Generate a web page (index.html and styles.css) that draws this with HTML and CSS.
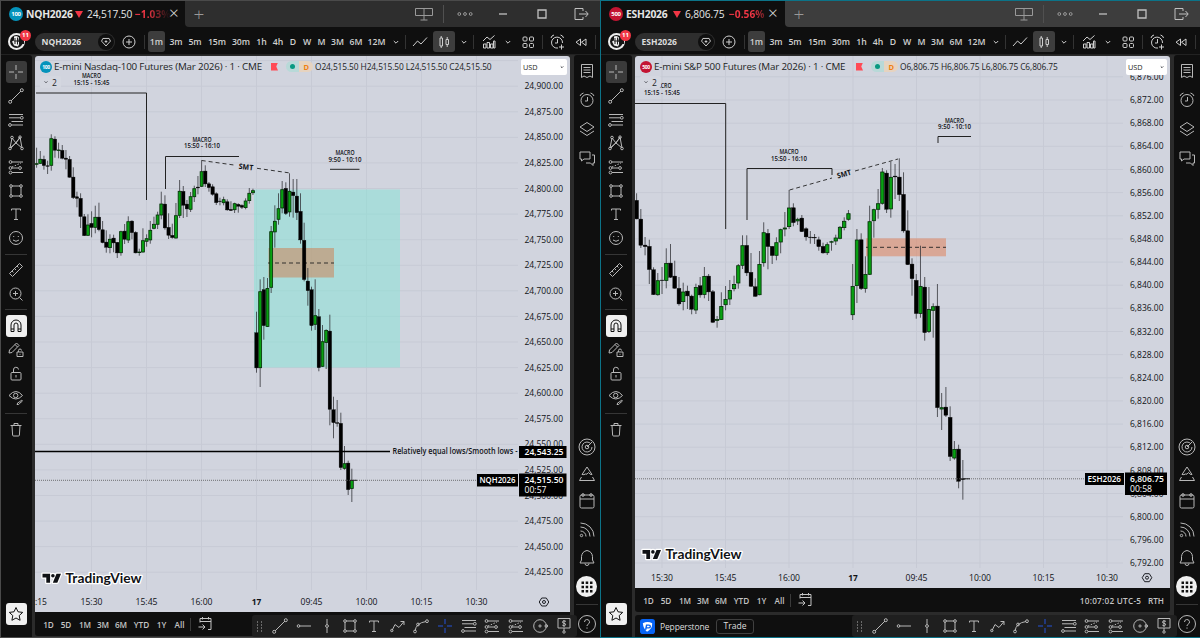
FILE: index.html
```html
<!DOCTYPE html>
<html lang="en">
<head>
<meta charset="utf-8">
<title>NQH2026 / ESH2026</title>
<link rel="stylesheet" href="styles.css">
</head>
<body>
<svg class="defs" width="0" height="0" aria-hidden="true">
  <symbol id="cross" viewBox="0 0 18 18"><path d="M9 2v5M9 11v5M2 9h5M11 9h5"/></symbol>
  <symbol id="trend" viewBox="0 0 18 18"><path d="M4 14 14 4"/><circle cx="3.2" cy="14.8" r="1.5"/><circle cx="14.8" cy="3.2" r="1.5"/></symbol>
  <symbol id="fib" viewBox="0 0 18 18"><path d="M2 3.5h14M2 6.8h11M4.500 10.5H16M4.500 14H16"/><circle cx="14.8" cy="6.800" r="1.400"/><circle cx="3" cy="14" r="1.400"/></symbol>
  <symbol id="xabcd" viewBox="0 0 18 18"><path d="m3 14 2-10 4 5 4-6 2 11-6-5zM4 14l9-10"/><circle cx="3" cy="14.500" r="1.300"/><circle cx="5" cy="3.500" r="1.300"/><circle cx="13" cy="3.200" r="1.300"/><circle cx="15" cy="14.500" r="1.300"/></symbol>
  <symbol id="pos" viewBox="0 0 18 18"><path d="M5 4h11M5 10h6M5 14.500h11"/><path stroke-dasharray="1.500 1.500" d="m5 9 9-4"/><circle cx="3.500" cy="4" r="1.400"/><circle cx="3.500" cy="10" r="1.400"/><circle cx="3.500" cy="14.500" r="1.400"/><circle cx="13" cy="10" r="1.400"/></symbol>
  <symbol id="rect" viewBox="0 0 18 18"><path d="M5 4h8M5 14h8M4 5v8M14 5v8"/><circle cx="4" cy="4" r="1.300"/><circle cx="14" cy="4" r="1.300"/><circle cx="4" cy="14" r="1.300"/><circle cx="14" cy="14" r="1.300"/></symbol>
  <symbol id="text" viewBox="0 0 18 18"><path d="M4.500 5.500V4h9v1.500M9 4v10.500M7 14.500h4"/></symbol>
  <symbol id="smile" viewBox="0 0 18 18"><circle cx="9" cy="9" r="6.500"/><path d="M6.700 7v1M11.300 7v1M6 11q3 2.600 6 0"/></symbol>
  <symbol id="ruler" viewBox="0 0 18 18"><path d="m2.500 12.500 10-10 3 3-10 10zM5 10l1.500 1.500M7.500 7.500 9 9M10 5l1.500 1.500"/></symbol>
  <symbol id="zoomin" viewBox="0 0 18 18"><circle cx="8.500" cy="8.500" r="5.500"/><path d="m12.500 12.500 3 3M6 8.500h5M8.500 6v5"/></symbol>
  <symbol id="magnet" viewBox="0 0 18 18"><path d="M4 14.500V8a5 5 0 0 1 10 0v6.500h-3V8a2 2 0 0 0-4 0v6.500zM4 12h3M11 12h3"/></symbol>
  <symbol id="penlock" viewBox="0 0 18 18"><path d="m2 12 .5-3 7-7 2.500 2.500-7 7zM8 3.500 10.500 6M10 11h6v4.500h-6zM11.500 11V9.500a1.500 1.500 0 0 1 3 0M13 12.800v1"/></symbol>
  <symbol id="lock" viewBox="0 0 18 18"><rect x="4" y="7.500" width="10" height="7.500" rx="1"/><path d="M6.500 7.500V5a2.500 2.500 0 0 1 5-.5M9 10v2.500"/></symbol>
  <symbol id="eye" viewBox="0 0 18 18"><path d="M2 6.500q7-8 13.500 0-6.500 7-13.500 0zM10 15.500q2 .5 2.500-1l3-2.500-.8-.8-2.700 2q-1.500 0-2 2.300z"/><circle cx="8.700" cy="6.500" r="2.200"/></symbol>
  <symbol id="trash" viewBox="0 0 18 18"><path d="M3.500 4.500h11M7 4.500v-2h4v2M5 4.500l.6 9.500q.1 1 1 1h4.800q.900 0 1-1l.6-9.500"/></symbol>
  <symbol id="star" viewBox="0 0 18 18"><path d="m9 2.500 2 4.300 4.700.6-3.500 3.200.9 4.700L9 13l-4.100 2.300.9-4.700L2.300 7.400 7 6.800z"/></symbol>
  <symbol id="list" viewBox="0 0 18 18"><path d="M3.500 2.500h11v13L12 14l-3 1.500L6 14l-2.500 1.500zM5.500 5.500h7M5.500 8h7M5.500 10.500h7"/></symbol>
  <symbol id="alarm" viewBox="0 0 18 18"><circle cx="9" cy="9.500" r="6"/><path d="M9.500 6v4H7M2 5q1-2.500 3.500-3M16 5q-1-2.500-3.500-3"/></symbol>
  <symbol id="alarmadd" viewBox="0 0 18 18"><path d="M14.500 10a5.500 5.500 0 1 0-4.500 5M9.500 6v4H7M3 5q.5-2.500 3-3M15.500 5q-.5-2.500-3-3M13.500 11.500v5M11 14h5"/></symbol>
  <symbol id="layers" viewBox="0 0 18 18"><path d="m9 2.500 7 4.500-7 4.500L2 7zM2 11l7 4.500L16 11"/></symbol>
  <symbol id="chat" viewBox="0 0 18 18"><path d="M2 3h10v7H6l-2.500 2V10H2zM14 6h2.500v8H15v2.500L12.500 14H8"/></symbol>
  <symbol id="target" viewBox="0 0 18 18"><circle cx="9" cy="9" r="8"/><path d="M13 6A5 5 0 1 0 14 9M9 9l5-5"/><circle cx="9" cy="9" r="1.800"/></symbol>
  <symbol id="pyramid" viewBox="0 0 18 18"><path d="m9 2 5 7.500q-2 .5-3.500-2-1.500 2.500-3 1.500-1.500 1-3.500.5zM3.500 12l-2 3.500h15l-2-3.500"/></symbol>
  <symbol id="cal" viewBox="0 0 18 18"><rect x="2" y="3" width="14" height="13" rx="1.500"/><path d="M2 7h14"/><circle cx="5" cy="3" r="1.300"/><circle cx="13" cy="3" r="1.300"/></symbol>
  <symbol id="rss" viewBox="0 0 18 18"><circle cx="3.500" cy="14.500" r="1.200"/><path d="M2.500 10a5.500 5.500 0 0 1 5.500 5.500M2.500 6a9.500 9.500 0 0 1 9.500 9.500M2.500 2A13.500 13.500 0 0 1 16 15.500"/></symbol>
  <symbol id="bell" viewBox="0 0 18 18"><path d="M2 14h14l-1.500-3V7.500Q14 2.500 9 1.500 4 2.500 3.500 7.500V11zM7 14.500a2 2 0 0 0 4 0"/></symbol>
  <symbol id="apps" viewBox="0 0 18 18"><path class="solid" d="M3.500 3.500h2.500V6H3.500zM7.700 3.500h2.500V6H7.700zM12 3.500h2.500V6H12zM3.500 7.700h2.500v2.500H3.500zM7.700 7.700h2.500v2.500H7.700zM12 7.700h2.500v2.500H12zM3.500 12h2.500v2.500H3.500zM7.700 12h2.500v2.500H7.700zM12 12h2.500v2.500H12z"/></symbol>
  <symbol id="help" viewBox="0 0 18 18"><circle cx="9" cy="9" r="8.500"/><path d="M6.500 7a2.500 2.500 0 1 1 3.500 2.300q-1 .5-1 1.700M9 12.500v1.200"/></symbol>
  <symbol id="chev" viewBox="0 0 18 18"><path d="m6.800 8 2.200 2.200L11.200 8"/></symbol>
  <symbol id="line" viewBox="0 0 18 18"><path d="m2 13 4.500-5L10 11l6-6.500"/></symbol>
  <symbol id="candles" viewBox="0 0 18 18"><path d="M5 5h2.500v8H5zM6.200 3v2M6.200 13v2M11 6.500h2.500v5H11zM12.200 4v2.500M12.200 11.500V14"/></symbol>
  <symbol id="ind" viewBox="0 0 18 18"><path d="M3.500 15v-4H6v4zM7 15V9.500h2.500V15zM10.500 15v-4H13v4zM13.500 15V8H15v7zM3 8l4-4 3 2.500 4.500-4"/></symbol>
  <symbol id="grid4" viewBox="0 0 18 18"><rect x="4" y="4" width="4" height="4" rx="1"/><rect x="10.500" y="4" width="4" height="4" rx="1"/><rect x="4" y="10.500" width="4" height="4" rx="1"/><rect x="10.500" y="10.500" width="4" height="4" rx="1"/></symbol>
  <symbol id="rewind" viewBox="0 0 18 18"><path d="M8.500 6v6.500L4 9.200zM14 6v6.500L9.500 9.200z"/></symbol>
  <symbol id="plusc" viewBox="0 0 18 18"><circle cx="9" cy="9" r="6"/><path d="M6 9h6M9 6v6"/></symbol>
  <symbol id="gem" viewBox="0 0 18 18"><path d="M5.500 5h7L14 8l-5 5.500L4 8z"/><path d="M9 7v3M7.500 8.500h3"/></symbol>
  <symbol id="hline" viewBox="0 0 18 18"><path d="M4.500 9H16"/><circle cx="3.500" cy="9" r="1.300"/></symbol>
  <symbol id="vline" viewBox="0 0 18 18"><path d="M9 2v5.500M9 10.500V16"/><circle cx="9" cy="9" r="1.400"/></symbol>
  <symbol id="poly" viewBox="0 0 18 18"><path d="m3 13.500 3-6 4 3 5-6M11.500 4.500H15V8"/><circle cx="2.800" cy="13.500" r="1.200"/></symbol>
  <symbol id="curve" viewBox="0 0 18 18"><path d="M3 14Q4 6 14 4.500"/><circle cx="3" cy="14.500" r="1.400"/><circle cx="6" cy="7.500" r="1.400"/><circle cx="15" cy="4.200" r="1.400"/></symbol>
  <symbol id="circ" viewBox="0 0 18 18"><circle cx="9" cy="9" r="6.300"/><circle cx="9" cy="9" r="1.100"/><circle cx="15.300" cy="9" r="1.300"/></symbol>
  <symbol id="board" viewBox="0 0 18 18"><path d="M3 1.500h12V11H3zM9 11v3M11 4.300q-3.500-1.300-3.500.7 0 1.200 1.500 1.300 2 .3 1.700 1.600-.7 1.400-3.400.3M9 3v7"/><circle cx="9" cy="15" r="1.200"/></symbol>
  <symbol id="goto" viewBox="0 0 18 18"><path d="M4 7.500v-4h11v11h-3M4 6.500h11M6.500 2v2.500M12.500 2v2.500M2.500 12h6M6.500 9.500 9 12l-2.500 2.500"/></symbol>
  <symbol id="layout" viewBox="0 0 18 18"><path d="M.5 3.500h17v7H.5zM9 3.500V15M5.500 15h7"/></symbol>
  <symbol id="dots" viewBox="0 0 18 18"><circle cx="3.300" cy="9" r="1.400"/><circle cx="9" cy="9" r="1.400"/><circle cx="14.700" cy="9" r="1.400"/></symbol>
  <symbol id="min" viewBox="0 0 18 18"><path stroke-width="1.300" d="M5 9h8"/></symbol>
  <symbol id="max" viewBox="0 0 18 18"><path stroke-width="1.300" d="M5 5h8v8H5z"/></symbol>
  <symbol id="exit" viewBox="0 0 18 18"><path d="M11 6V3.500H3v11h8V12M7 9h9M13.500 6 16.200 9l-2.700 3"/></symbol>
  <symbol id="drag" viewBox="0 0 18 18"><path class="solid" d="M6 4.500h1v1H6zM10 4.500h1v1h-1zM6 7.500h1v1H6zM10 7.500h1v1h-1zM6 10.500h1v1H6zM10 10.500h1v1h-1zM6 13.500h1v1H6zM10 13.500h1v1h-1z"/></symbol>
  <symbol id="hex" viewBox="0 0 18 18"><path d="M6.700 5h4.600l2.500 4-2.500 4H6.700L4.200 9z"/><circle cx="9" cy="9" r="1.500"/></symbol>
</svg>

<main class="desktop">
  <section class="window" data-window="nq">
    <header class="tabs">
      <div class="tab"><span class="coin nq">100</span><b class="sym">NQH2026</b><i class="down"></i><span class="last">24,517.50</span><b class="chg">−1.03%</b><span class="close">×</span></div>
      <div class="rest"></div>
    </header>
    <nav class="toolbar" data-symbol="NQH2026"></nav>
    <aside class="rail left"></aside>
    <div class="center">
      <div class="chart">
        <svg class="plot" viewBox="35 56 535 556"></svg>
        <div class="legend"><span class="coin nq">100</span><span class="title nqt">E-mini Nasdaq-100 Futures (Mar 2026) · 1 · CME</span><i class="flag"></i><span class="status"><i></i><b>D</b></span><span class="ohlc nqo">O24,515.50 H24,515.50 L24,515.50 C24,515.50</span></div>
        <div class="count"><svg class="ic"><use href="#chev"/></svg>2</div>
        <div class="currency nqc">USD<svg class="ic"><use href="#chev"/></svg></div>
      </div>
      <footer class="ranges"></footer>
    </div>
    <aside class="rail right"></aside>
    <div class="drawbar"></div>
  </section>

  <section class="window active" data-window="es">
    <header class="tabs">
      <div class="tab"><span class="coin es">500</span><b class="sym">ESH2026</b><i class="down"></i><span class="last">6,806.75</span><b class="chg">−0.56%</b><span class="close">×</span></div>
      <div class="rest"></div>
    </header>
    <nav class="toolbar" data-symbol="ESH2026"></nav>
    <aside class="rail left"></aside>
    <div class="center">
      <div class="chart">
        <svg class="plot" viewBox="635 56 535 532"></svg>
        <div class="legend"><span class="coin es">500</span><span class="title est">E-mini S&amp;P 500 Futures (Mar 2026) · 1 · CME</span><i class="flag"></i><span class="status"><i></i><b>D</b></span><span class="ohlc eso">O6,806.75 H6,806.75 L6,806.75 C6,806.75</span></div>
        <div class="count"><svg class="ic"><use href="#chev"/></svg>2</div>
        <div class="currency">USD<svg class="ic"><use href="#chev"/></svg></div>
      </div>
      <footer class="ranges"></footer>
      <div class="broker">
        <svg class="brokerlogo" viewBox="0 0 16 16"><rect width="16" height="16" rx="3"/><path d="M3 4.500q5-2.500 10 0 .5 6-5.500 9Q3.500 10 3 4.500z"/><path class="cut" d="M6 11.500 7 6.500h2.500a1.500 1.500 0 0 1 0 3H7"/></svg>
        <span class="brokername">Pepperstone</span><span class="trade">Trade</span>
      </div>
    </div>
    <aside class="rail right"></aside>
    <div class="drawbar"></div>
  </section>
</main>
<script src="app.js"></script>
</body>
</html>
```

FILE: styles.css
```css
* { box-sizing: border-box; }
body { margin: 0; background: #0f0f0f; color: #d0d0d0; font-family: "Open Sans", "Noto Sans", sans-serif; font-size: 9px; }
.defs { position: absolute; }
.desktop { display: grid; grid-template-columns: 600px 600px; height: 638px; overflow: hidden; }
.window { position: relative; display: grid; grid-template: 26px 28px 582px / 32px 541px 26px; border: 1px solid #4a4a4a; border-right: 0; height: 638px; width: 600px; background: #2b2b2b; }
.window.active { border-color: #0c7388; }
.ic { width: 18px; height: 18px; flex: none; fill: none; stroke: currentColor; stroke-width: 1; overflow: visible; }
.solid { fill: currentColor; stroke: none; }

.tabs { grid-column: 1 / -1; display: grid; grid-template-columns: 184px 1fr; background: #0f0f0f; }
.tab { display: flex; align-items: center; padding-left: 8px; white-space: nowrap; color: #e6e6e6; }
.coin { width: 14px; height: 14px; border-radius: 50%; display: grid; place-items: center; color: #fff; font-size: 6px; font-weight: 700; letter-spacing: -.3px; flex: none; }
.coin.nq { background: #0593bb; }
.coin.es { background: #c31432; }
.sym { font-size: 10.300px; width: 45px; margin-left: 3px; letter-spacing: -.2px; }
.down { border: 4px solid transparent; border-top: 7px solid #f23645; border-bottom: 0; margin: 0 4px; }
.last { font-size: 10.200px; width: 45px; letter-spacing: -.1px; margin-right: 3px; }
.active .sym { width: 43px; }
.active .last { width: 41px; }
.chg { font-size: 10.200px; width: 35px; overflow: hidden; background: linear-gradient(90deg, #f23645 35%, #f2364510 95%); background-clip: text; color: transparent; }
.active .chg { width: 40px; background-image: linear-gradient(90deg, #f23645 60%, #f2364530); }
.close { font-size: 17px; line-height: 10px; font-weight: 300; padding-bottom: 2px; margin-left: -1px; }
.rest { background: #2e2e2e; border-bottom-left-radius: 4px; display: grid; grid-template-columns: 28px 192px 38px 1px 41px 36px 42px 36px; place-items: center; color: #999; }
.active .rest { background: #3d3d3d; }
.rest .bar { width: 1px; height: 18px; background: #505050; }
.rest .ic:nth-last-child(-n+3) { color: #c0c0c0; }
.plus { font-size: 19px; line-height: 20px; font-weight: 300; color: #999; }

.toolbar { grid-column: 1 / -1; background: #0f0f0f; border-bottom: 1px solid #222; display: grid; padding-top: 2px; align-items: center; justify-items: center; white-space: nowrap;
  grid-template-columns: 31px 85px 24px 6px 19px 20px 18px 26px 22px 19px 14px 16px 12px 17px 15px 22px 19px 19px 1px 27px 22px 17px 3px 28px 10px 29px 1px 27px 22px 6px; }
.toolbar > span { display: flex; justify-content: center; width: 0; font-weight: 600; font-size: 8.700px; color: #cfcfcf; }
.toolbar > .on { width: 17px; height: 21px; align-items: center; background: #3d3d3d; border-radius: 3px; }
.toolbar > .on:has(svg) { width: 22px; }
.toolbar .bar { width: 1px; height: 14px; background: #333; }
.avatar { width: 17px; height: 17px; border-radius: 50%; background: #eee; position: relative; }
.avatar svg { display: block; width: 17px; height: 17px; }
.avatar b { position: absolute; left: 12px; top: -3px; width: 11px; height: 11px; border-radius: 50%; background: #f23645; color: #fff; font-size: 6px; line-height: 11px; text-align: center; }
.pill { width: 80px; height: 18px; border-radius: 9px; background: #2e2e2e; display: flex; align-items: center; justify-content: space-between; padding: 0 1px 0 7px; font-weight: 700; font-size: 8.500px; color: #ddd; }
.pill .ic { width: 16px; height: 16px; border-radius: 50%; background: #0f0f0f; }

.rail { background: #0f0f0f; display: grid; justify-items: center; align-items: center; color: #b8b8b8; }
.rail .bar { width: 22px; height: 1px; background: #363636; }
.rail.left { width: 31px; padding-top: 5px; align-content: start; border-top-right-radius: 3px; grid-template-rows: 24px 24px 23px 24px 24px 23px 24px 24px 8px 24px 23px 9px 24px 24px 24px 23px 9px 23px 162px 22px; }
.rail.right { width: 26px; padding-top: 2px; padding-right: 1px; align-content: start; border-top-left-radius: 3px; grid-template-rows: 28px 29px 29px 29px 261px 27px 27px 28px 29px 28px 29px 7px 31px; }
.rail .box { width: 21px; height: 22px; border-radius: 3px; display: grid; place-items: center; background: #3a3a3a; }
.rail .box.white { background: #f0f0f0; color: #111; }
.rail.left > * { margin-right: 1px; }
.rail .round { width: 21px; height: 21px; border-radius: 50%; display: grid; place-items: center; background: #f0f0f0; color: #111; }

.center { margin: 1px 4px 0 2px; width: 535px; display: flex; flex-direction: column; }
.chart { position: relative; height: 556px; flex: none; border-radius: 3px 3px 0 0; overflow: hidden; background: #d1d4de; color: #1c1e24; }
.active .chart { height: 532px; }
.plot { display: block; width: 535px; height: 100%; font-size: 8.800px; font-weight: 500; fill: #101216; }
.legend { position: absolute; left: 5px; top: 3px; height: 15px; display: flex; align-items: center; white-space: nowrap; font-weight: 500; }
.legend .coin { width: 12px; height: 12px; font-size: 5px; }
.title { font-size: 9.800px; letter-spacing: -.18px; margin-left: 2px; width: 217px; flex: none; }
.title.est { width: 202px; }
.flag { width: 7px; height: 8px; background: #ff4a55; clip-path: polygon(0 0, 100% 0, 75% 50%, 100% 100%, 0 100%); }
.status { width: 27px; height: 11px; margin-left: 8px; border-radius: 6px; background: linear-gradient(90deg, #b8d9d8 50%, #e6d3c0 50%); display: grid; grid-template-columns: 1fr 1fr; place-items: center; color: #f08010; font-size: 7.500px; }
.status i { width: 5px; height: 5px; border-radius: 50%; background: #089981; }
.ohlc { font-size: 8.400px; margin-left: 2px; letter-spacing: -.09px; }
.count { position: absolute; left: 5px; top: 20px; height: 12px; display: flex; align-items: center; font-size: 8.500px; padding-right: 4px; background: #d4d7e0; border-radius: 2px; }
.count .ic { width: 12px; }
.currency { position: absolute; right: 3px; top: 3px; width: 41px; height: 16px; border-radius: 2px; background: #fff; font-size: 7.300px; font-weight: 500; display: flex; align-items: center; justify-content: space-between; padding-left: 2px; }
.currency.nqc { width: 46px; }
.currency .ic { width: 10px; stroke-width: 1.500; }

.ranges { height: 24px; flex: none; background: #0f0f0f; display: grid; align-items: center; justify-items: center; white-space: nowrap; font-size: 8.200px; font-weight: 600; color: #c4c4c4; grid-template-columns: 5px 17px 18px 20px 16px 20px 21px 19px 17px 4px 26px 1fr 63px 28px; border-radius: 0 0 3px 3px; }
.ranges .bar { width: 1px; height: 13px; background: #3a3a3a; }
.ranges span { display: flex; justify-content: center; width: 0; }
.ranges .clock { letter-spacing: .25px; }
.broker { margin-top: 3px; height: 22px; background: #0f0f0f; display: flex; align-items: center; padding-left: 5px; border-radius: 3px 3px 0 0; }
.brokerlogo { width: 15px; height: 15px; fill: #fff; }
.brokerlogo rect { fill: #0764f5; }
.brokerlogo .cut { fill: none; stroke: #0764f5; stroke-width: 1.500; }
.brokername { margin-left: 5px; width: 56px; font-size: 8.500px; letter-spacing: -.15px; color: #ddd; }
.trade { width: 38px; height: 15px; border: 1px solid #404040; border-radius: 3px; display: grid; place-items: center; font-size: 8.600px; color: #ddd; }
.drawbar { position: absolute; left: 251px; bottom: 0; width: 325px; height: 22px; background: #1f1f1f; border-radius: 3px; display: grid; align-items: center; justify-items: center; color: #b8b8b8; grid-template-columns: 15px 26px 21px 25px 22px 26px 22px 24px 24px 23px 24px 24px 24px 23px; }
.drawbar .blue { color: #2552d8; }

.grid { stroke: #c7cad5; stroke-width: 1; }
.wick { stroke: #33353a; stroke-width: .8; }
.up { fill: #08a012; stroke: #052d08; stroke-width: .8; }
.dn { fill: #000; stroke: #000; stroke-width: .4; }
.note { stroke: #222; fill: none; stroke-width: 1; }
.level { stroke: #000; stroke-width: 1.500; }
.dash { stroke: #222; fill: none; stroke-dasharray: 4 3; stroke-width: .9; }
.dotted { stroke: #555; stroke-dasharray: 1 1; stroke-width: .8; }
.small { font-size: 6.200px; font-weight: 600; }
.smt { font-size: 7.500px; font-weight: 700; }
.inv { fill: #fff; }
.bold { font-weight: 700; }
.semi { font-weight: 600; }
.halo { paint-order: stroke; stroke: #fff; stroke-width: 2.500px; stroke-linejoin: round; }
.brand { font-family: Lato, sans-serif; font-weight: 700; font-size: 12.500px; }
```

FILE: app.js
```js
const icon = (id, cls = '') => `<svg class="ic ${cls}"><use href="#${id}"/></svg>`;
const bar = '<i class="bar"></i>';
const each = (sel, fn) => document.querySelectorAll(sel).forEach(fn);

each('.rest', el => {
  el.innerHTML = '<span class="plus">+</span>' + '<i></i>' + icon('layout') + bar + icon('dots') + icon('min') + icon('max') + icon('exit');
});

const avatar = `<div class="avatar"><svg viewBox="0 0 17 17"><circle cx="8.500" cy="8.500" r="6.500" fill="#151515"/><path d="M6 3.500q3-1.500 5 1l-1 4 2 1-2 4-4-1-2-4 2-1z" fill="#eee"/><path d="M7 5v6M9.500 4.500v7M6 8h4" stroke="#222" fill="none"/><path d="M11 7h5v4h-5z" fill="#151515"/></svg><b>11</b></div>`;
each('.toolbar', el => {
  const t = s => `<span>${s}</span>`;
  el.innerHTML = avatar + `<div class="pill">${el.dataset.symbol}${icon('gem')}</div>` + icon('plusc') + bar +
    '<span class="on">1m</span>' + ['3m', '5m', '15m', '30m', '1h', '4h', 'D', 'W', 'M', '3M', '6M', '12M'].map(t).join('') +
    icon('chev') + bar + icon('line') + `<span class="on">${icon('candles')}</span>` + icon('chev') + bar +
    icon('ind') + icon('chev') + icon('grid4') + bar + icon('alarmadd') + icon('rewind') + bar;
});

each('.rail.left', el => {
  el.innerHTML = `<div class="box">${icon('cross')}</div>` +
    ['trend', 'fib', 'xabcd', 'pos', 'rect', 'text', 'smile'].map(i => icon(i)).join('') + bar +
    icon('ruler') + icon('zoomin') + bar + `<div class="box white">${icon('magnet')}</div>` +
    icon('penlock') + icon('lock') + icon('eye') + bar + icon('trash') + '<i></i>' + `<div class="box white">${icon('star')}</div>`;
});
each('.rail.right', el => {
  el.innerHTML = ['list', 'alarm', 'layers', 'chat'].map(i => icon(i)).join('') + '<i></i>' +
    ['target', 'pyramid', 'cal', 'rss', 'bell'].map(i => icon(i)).join('') +
    `<div class="round">${icon('apps')}</div>` + bar + icon('help');
});
each('.drawbar', el => {
  el.innerHTML = ['drag', 'trend', 'hline', 'vline', 'rect', 'text', 'poly', 'curve'].map(i => icon(i)).join('') +
    icon('cross', 'blue') + ['fib', 'pos', 'pos', 'circ', 'board'].map(i => icon(i)).join('');
});
each('.ranges', (el) => {
  const clock = el.closest('.active') ? '<i></i><span class="clock">10:07:02 UTC-5</span><span>RTH</span>' : '';
  el.innerHTML = '<i></i>' + ['1D', '5D', '1M', '3M', '6M', 'YTD', '1Y', 'All'].map(s => `<span>${s}</span>`).join('') + bar + icon('goto') + clock;
});

/* Each candle: colour, then high, body top, body bottom and low in thirds of a pixel */
const NQ1 = 'g173,220,224,233 g183,207,221,222 b197,208,227,239 b212,227,229,252 g133,145,227,242 b139,147,181,203 g158,179,182,205 b165,181,205,208 b180,204,208,238 b198,208,262,263 b232,261,323,327 b305,320,325,352 b310,325,380,414 b372,380,437,438 g373,404,437,438 b364,400,413,442 g347,381,413,430 b338,381,419,424 b393,419,458,460 b421,456,472,488 g433,447,474,490 b434,444,459,487 b456,457,489,504 g422,424,489,497 b402,423,448,462 g379,394,451,459 b391,393,428,448 b424,427,489,490 g476,485,489,497 g415,451,487,488 g433,445,455,470 g393,420,451,461 g380,402,416,418 g365,374,404,417 g305,341,376,388 b316,342,414,419 b370,412,436,447 b401,436,443,446 g339,376,445,446 g270,303,377,384 b288,304,346,384 b330,342,357,381 g306,319,359,366 g287,295,321,336 b258,291,294,313 g211,244,290,291 b226,243,282,291 b276,281,293,305 b283,290,313,317 b307,311,338,345 b323,333,335,346 g320,328,339,346 b328,335,360,362 b334,358,362,363 g338,340,360,369 b340,343,349,368 b343,346,352,357 g325,332,354,358 g294,309,333,341 g296,301,309,315';
const NQ2 = 'b485,548,654,668 g388,424,654,711 b381,419,527,569 g384,414,530,531 g228,244,413,429 g166,213,247,293 g130,175,209,224 g93,118,175,190 b97,115,191,195 g70,123,187,200 b87,126,137,203 b87,138,188,210 b130,184,270,281 b218,271,389,394 b354,393,422,467 b410,419,527,542 g388,496,524,540 b477,500,653,664 g525,574,650,651 g538,540,578,657 b494,543,778,826 b740,779,818,865 b750,818,820,830 b788,820,953,960 g888,940,956,959 b932,939,1019,1035 g956,990,1016,1056';
const ES = 'b160,181,237,238 b207,237,316,324 b291,315,320,346 b299,319,389,432 b382,389,464,465 g399,421,465,467 b381,420,422,462 g325,369,422,445 b312,369,412,414 b362,408,445,446 b411,445,492,497 g428,455,486,511 b437,453,468,507 b464,468,508,523 g431,441,511,522 b411,437,465,473 g381,408,464,475 b402,408,456,483 b450,455,547,548 g528,537,542,563 g457,498,539,540 g438,477,495,511 g420,450,478,495 g407,432,447,454 g372,376,430,446 g286,316,377,387 b286,316,399,408 b339,397,439,441 b415,440,469,470 g333,372,465,466 g247,277,369,380 b267,280,320,388 b318,319,347,372 g292,307,347,361 g266,268,307,340 g216,263,268,289 g150,203,261,267 b190,203,248,259 g233,237,244,255 b225,234,275,276 b262,266,291,302 b273,291,293,311 b282,292,294,312 b290,299,320,332 b308,319,339,341 g307,313,339,345 g302,304,307,332 g284,293,304,315 g258,261,296,298 g232,243,264,271 g210,220,239,242 g372,438,525,540 g267,299,438,489 b280,299,446,450 g349,402,446,458 g197,244,404,405 g206,208,243,293 g147,190,209,236 g84,95,191,194 b91,99,208,219 g65,111,208,233 b72,108,111,177 b55,111,164,183 b97,163,273,278 b211,272,374,375 b355,372,416,467 b402,421,521,536 g317,438,521,533 b411,441,578,602 g441,507,575,579 g490,499,512,593 b432,498,803,831 g759,802,808,870 b741,801,826,831 b799,832,950,963 g903,927,955,959 b914,927,1024,1045 b960,1016,1019,1079';

function candles(data, x0, step, base, w) {
  return data.split(' ').map((c, i) => {
    const [h, t, b, l] = c.slice(1).split(',').map(v => base + v / 3);
    const x = x0 + i * step, up = c[0] === 'g', inset = up ? .35 : .1;
    return `<path class="wick" d="M${x.toFixed(2)} ${h.toFixed(1)}V${l.toFixed(1)}"/>` +
      `<rect class="${up ? 'up' : 'dn'}" x="${(x - w / 2 + inset).toFixed(2)}" y="${(t + inset).toFixed(1)}" width="${(w - 2 * inset).toFixed(2)}" height="${Math.max(b - t - 2 * inset, .5).toFixed(1)}"/>`;
  }).join('');
}
/* Text that starts at x and fills the given width, centred vertically on y */
const label = (s, x, y, w, cls = '', dy = 3.1) => `<text class="${cls}" x="${x}" y="${y + dy}" textLength="${w}" lengthAdjust="spacingAndGlyphs">${s}</text>`;
const mid = (s, cx, y, w, cls, dy) => label(s, cx - w / 2, y, w, cls, dy);
const path = (cls, d) => `<path class="${cls}" d="${d}"/>`;
const box = (x, y, w, h, fill) => `<rect x="${x}" y="${y}" width="${w}" height="${h}" fill="${fill}"/>`;
const macro = (cx, y, hours, w) => mid('MACRO', cx, y, 19, 'small', 2.2) + mid(hours, cx, y + 6.7, w, 'small', 2.2);
const gear = (x, y) => `<svg x="${x - 9}" y="${y - 9}" class="ic" width="18" height="18"><use href="#hex"/></svg>`;
const brand = (x, y) => `<path class="halo" transform="translate(${x} ${y})" d="M0-4.500h7.600V4.500H3.800V-.7H0zM8.600-2.600a1.800 1.800 0 1 0 3.600 0a1.800 1.800 0 1 0-3.600 0zM14-4.500H18.500L14.800 4.500H10.300z"/>` + label('TradingView', x + 23, y, 76, 'brand halo', 4.4);

function plot(sel, o) {
  let s = '';
  for (let y = o.y0 - o.dy; y < o.bottom; y += o.dy) s += path('grid', `M${o.left} ${y.toFixed(1)}H${o.right}`);
  o.times.forEach(([, x]) => { s += path('grid', `M${x} 56V${o.bottom + 3}`); });
  s += o.under + o.series + o.over;
  for (let i = o.first; i < o.rows; i++) {
    const p = (o.top - i * o.inc).toLocaleString('en-US', { minimumFractionDigits: 2 });
    s += label(p, o.px, o.y0 + i * o.dy, o.pw);
  }
  o.times.forEach(([t, x]) => { s += mid(t, x, o.ty, t === '17' ? 9.5 : 22, t === '17' ? 'bold' : ''); });
  document.querySelector(sel).innerHTML = s + o.tags;
}

plot('[data-window=nq] .plot', {
  left: 35, right: 518, y0: 86.2, dy: 25.58, bottom: 587, top: 24900, inc: 25, rows: 20, first: 0, px: 524.5, pw: 38.5, ty: 602,
  times: [['15:30', 91.5], ['15:45', 146.5], ['16:00', 201.5], ['17', 256.5], ['09:45', 311.5], ['10:00', 366.5], ['10:15', 421.5], ['10:30', 476.5]],
  under: box(254, 189.5, 146, 178, '#7fe6d67a') + box(268.5, 248, 65.5, 29.5, '#cc865b91') + path('dash', 'M268 263H334'),
  series: candles(NQ1, 36.6, 3.667, 90, 3.6) + candles(NQ2, 256.5, 3.667, 150, 3.6),
  over: path('note', 'M36 93H146.500V200M165.500 189V156.500H239M330 169.300H359.500') +
    macro(91.5, 75.8, '15:15 - 15:45', 36) + macro(202, 139.3, '15:50 - 16:10', 36) + macro(345, 152.6, '9:50 - 10:10', 33) +
    path('dash', 'M201.700 160.500 236 165.300M257 168.300 290 173') + `<g transform="rotate(6 246 167)">${mid('SMT', 246, 167, 14.5, 'smt', 2.6)}</g>` +
    path('level', 'M35 451.500H390') + path('dotted', 'M35 480.300H477') + path('note', 'M350 480.300H357'),
  tags: mid(':15', 41, 602, 12) + label('Relatively equal lows/Smooth lows -', 392.5, 451.5, 125, 'semi', 2.8) +
    box(519, 446, 47.5, 12, '#000') + label('24,543.25', 524.5, 452, 39, 'inv semi') +
    box(477, 474, 41, 12.5, '#000') + label('NQH2026', 479.5, 480.2, 36, 'inv semi') +
    box(519, 473.5, 47.5, 23, '#000') + label('24,515.50', 524.5, 480.2, 39, 'inv semi') + label('00:57', 524.5, 490.3, 22, 'inv') +
    gear(544, 602) + brand(42.5, 578.3)
});

plot('[data-window=es] .plot', {
  left: 635, right: 1123, y0: 100, dy: 23.15, bottom: 565, top: 6872, inc: 4, rows: 21, first: -1, px: 1130, pw: 33.5, ty: 577.7,
  times: [['15:30', 662], ['15:45', 725.5], ['16:00', 789], ['17', 853], ['09:45', 916.5], ['10:00', 980], ['10:15', 1043.5], ['10:30', 1107]],
  under: box(866, 238.3, 80, 18, '#e0825b8c') + path('dash', 'M866 247.300H946'),
  series: candles(ES, 636.6, 4.237, 140, 4),
  over: path('note', 'M635 103.500H725.700V229M747 220V168.500H832V175M938 143V136.500H971') +
    macro(662, 86, '15:15 - 15:45', 36) + macro(789, 152, '15:50 - 16:10', 36) + macro(954.5, 120.3, '9:50 - 10:10', 33) +
    path('dash', 'M789.500 190 832 178M855 171 898 159') + `<g transform="rotate(-15 844 174)">${mid('SMT', 844, 174, 14.5, 'smt', 2.6)}</g>` +
    path('dotted', 'M635 478.800H1085') + path('note', 'M963 478.800H970'),
  tags: box(1085, 473, 39, 12, '#000') + label('ESH2026', 1087.5, 479, 33.5, 'inv semi') +
    box(1125, 472.5, 42, 22.5, '#000') + label('6,806.75', 1130, 479, 34, 'inv semi') + label('00:58', 1130, 489, 22, 'inv') +
    gear(1147, 577.7) + brand(642.5, 554.5)
});
```
